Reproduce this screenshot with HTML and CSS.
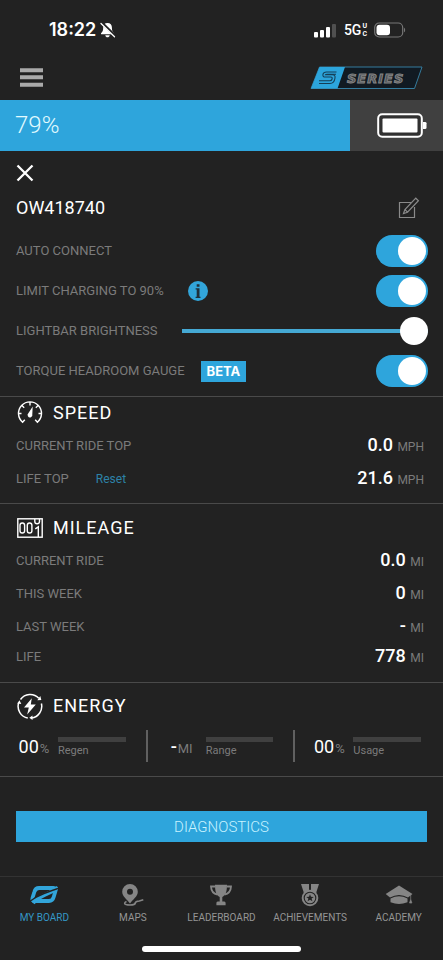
FILE: index.html
```html
<!DOCTYPE html>
<html lang="en">
<head>
<meta charset="utf-8">
<meta name="viewport" content="width=device-width, initial-scale=1">
<title>My Board</title>
<link rel="stylesheet" href="styles.css">
</head>
<body>
<div class="status">
  <div class="status-side">
    <span class="clock">18:22</span>
    <svg width="16" height="17" viewBox="0 0 16 17" aria-hidden="true">
      <path d="M7.500 1c-2.900 0-4.300 2-4.300 4.400 0 3.200-.6 4-2 5.500-.5.600-.2 1.300.5 1.300h11.700c.7 0 1-.7.500-1.300-1.400-1.500-2-2.300-2-5.500C11.900 3 10.400 1 7.500 1zM5.300 13.200h4.400c-.2 1.300-1.100 2.100-2.200 2.100s-2-.8-2.200-2.100z" fill="#fff"/>
      <path d="M2 1l13.500 13.200" stroke="#222" stroke-width="2.600"/>
      <path d="M1 1.500l13.500 13.200" stroke="#fff" stroke-width="1.300" stroke-linecap="round"/>
    </svg>
  </div>
  <div class="status-side status-right">
    <svg width="23" height="15" viewBox="0 0 23 15" aria-hidden="true">
      <rect x="0" y="9" width="4" height="5.500" rx="1" fill="#fff"/>
      <rect x="6" y="7" width="4" height="7.500" rx="1" fill="#fff"/>
      <rect x="12" y="4" width="4" height="10.500" rx="1" fill="#fff"/>
      <rect x="18" y="1" width="4" height="13.500" rx="1" fill="#505050"/>
    </svg>
    <span class="network">5G<span class="carrier"><span>U</span><span>C</span></span></span>
    <svg width="32" height="16" viewBox="0 0 32 16" aria-hidden="true">
      <rect x=".7" y="1" width="28" height="14" rx="4.500" fill="none" stroke="#777" stroke-width="1.200"/>
      <rect x="2.500" y="2.700" width="13.500" height="10.600" rx="3" fill="#fff"/>
      <path d="M30 5.700c1.500.6 1.500 4 0 4.600z" fill="#777"/>
    </svg>
  </div>
</div>

<header class="topbar">
  <button class="icon-button" aria-label="Menu">
    <svg width="23" height="20" viewBox="0 0 23 20"><path d="M0 2.200h23M0 9.300h23M0 16.700h23" stroke="#aaa" stroke-width="4"/></svg>
  </button>
  <svg width="113" height="24" viewBox="0 0 113 24" role="img" aria-label="S Series">
    <path d="M9.500 1H112L104.500 22.500H1z" fill="#111a22" stroke="#347b9d"/>
    <path d="M9.500 1H35L27.500 22.500H1z" fill="#2ca5dc"/>
    <path d="M26.500 6H16.500q-3 0-3.500 2.200-.6 2.800 2.300 2.800h5.500q1.800 0 1.300 2-.5 1.800-2.400 1.800H9M26 8.300H17q-1.300 0-1.500.4h7q3 0 2.500 3.300-.8 5.500-5 5.500H9" fill="none" stroke="#153f56" stroke-width="1.100"/>
    <text x="37" y="16.500" class="logo-text">SERIES</text>
  </svg>
</header>

<section class="charge" aria-label="Battery">
  <div class="charge-fill" style="width:79%">79%</div>
  <svg class="charge-icon" width="50" height="25" viewBox="0 0 50 25" aria-hidden="true">
    <rect x="1.200" y="1.200" width="43.600" height="22.600" rx="4" fill="#303030" stroke="#fff" stroke-width="2"/>
    <rect x="5.500" y="5.500" width="35" height="14" rx="1" fill="#fff"/>
    <path d="M46 9h2q1.500 0 1.500 1.200v4.600Q49.500 16 48 16h-2z" fill="#fff"/>
  </svg>
</section>

<main>
  <section class="settings">
    <button class="icon-button close" aria-label="Close">
      <svg width="18" height="18" viewBox="0 0 18 18"><path d="M1.500 1.500l15 15M16.500 1.500l-15 15" stroke="#fff" stroke-width="2.300"/></svg>
    </button>
    <div class="board">
      <h1>OW418740</h1>
      <button class="icon-button" aria-label="Rename board">
        <svg width="22" height="22" viewBox="0 0 22 22" fill="none" stroke="#8a8a8a" stroke-width="1.200"><path d="M13 5.500H1.500V20.500H16.500V10"/><path d="M5.500 16.500l1.400-4L17.800 1.200l2.600 2.500L9.500 15.200zM6.900 12.500l2.600 2.700"/></svg>
      </button>
    </div>
    <div class="setting">
      <label for="auto">AUTO CONNECT</label>
      <input class="toggle" id="auto" type="checkbox" role="switch" checked>
    </div>
    <div class="setting">
      <label for="limit">LIMIT CHARGING TO 90%</label>
      <button class="icon-button info" aria-label="About charge limit">
        <svg width="20" height="20" viewBox="0 0 20 20"><circle cx="10" cy="10" r="10" fill="#32a5da"/><path d="M8.700 3.200h2.800v2.500H8.700zM7.600 7.200h3.900v8.600h1v1.200H7.600v-1.200h1.100V8.400H7.600z" fill="#1f2f3a"/></svg>
      </button>
      <input class="toggle" id="limit" type="checkbox" role="switch" checked>
    </div>
    <div class="setting">
      <label for="brightness">LIGHTBAR BRIGHTNESS</label>
      <input class="slider" id="brightness" type="range" min="0" max="100" value="100">
    </div>
    <div class="setting">
      <label for="torque">TORQUE HEADROOM GAUGE</label>
      <span class="beta">BETA</span>
      <input class="toggle" id="torque" type="checkbox" role="switch" checked>
    </div>
  </section>

  <section class="panel speed">
    <h2>
      <svg width="26" height="24" viewBox="0 0 26 24" fill="none" stroke="#fff" stroke-width="1.400" aria-hidden="true">
        <path d="M5.700 21.300A11.500 11.500 0 1 1 20.300 21.300M7.800 18.700l-2.700 3.100M18.200 18.700l2.700 3.100M1.500 12.500h3M21.500 12.500h3M13 1v3.500M4.900 4.600l2.300 2.200M21.100 4.600l-2.300 2.200"/>
        <path d="M15.700 5.500l-.4 7.800a2.400 2.400 0 1 1-3.800-1.200z" fill="#fff" stroke="none"/>
      </svg>SPEED
    </h2>
    <dl>
      <div class="reading"><dt>CURRENT RIDE TOP</dt><dd>0.0 <small>MPH</small></dd></div>
      <div class="reading"><dt>LIFE TOP <button class="reset">Reset</button></dt><dd>21.6 <small>MPH</small></dd></div>
    </dl>
  </section>

  <section class="panel mileage">
    <h2>
      <svg width="26" height="20" viewBox="0 0 26 20" fill="none" stroke="#fff" stroke-width="1.400" aria-hidden="true">
        <rect x=".8" y=".8" width="24.400" height="18.400"/>
        <rect x="3" y="5" width="4.600" height="10" rx="2.200"/><rect x="10.300" y="5" width="4.600" height="10" rx="2.200"/>
        <path d="M17.800 1v2.500q0 2.200 2.300 2.200T22.500 3.500V1M18.300 10.800l3-2V19"/>
      </svg>MILEAGE
    </h2>
    <dl>
      <div class="reading"><dt>CURRENT RIDE</dt><dd>0.0 <small>MI</small></dd></div>
      <div class="reading"><dt>THIS WEEK</dt><dd>0 <small>MI</small></dd></div>
      <div class="reading"><dt>LAST WEEK</dt><dd>- <small>MI</small></dd></div>
      <div class="reading"><dt>LIFE</dt><dd>778 <small>MI</small></dd></div>
    </dl>
  </section>

  <section class="panel energy">
    <h2>
      <svg width="26" height="27" viewBox="0 0 26 27" fill="none" stroke="#fff" stroke-width="1.500" aria-hidden="true">
        <path d="M3.500 6.500A11.800 11.800 0 0 1 21.800 5.200M24.400 10.500A11.800 11.800 0 0 1 14.500 25M10.800 25A11.800 11.800 0 0 1 1.600 10"/>
        <path d="M20.300 7.300l4-.3-1-4zM15.500 22.500l-3.200 2.300 3.200 2.200zM.2 10.500l2.300-3.200 1.800 3.600zM14.800 5.200L7 14.500h4.800L10.200 21.500 18.800 11.600h-5z" fill="#fff" stroke="none"/>
      </svg>ENERGY
    </h2>
    <div class="stats">
      <div class="stat"><span class="amount">00<small>%</small></span><div class="meter"><i></i>Regen</div></div>
      <div class="stat"><span class="amount"><b>-</b><small>MI</small></span><div class="meter"><i></i>Range</div></div>
      <div class="stat"><span class="amount">00<small>%</small></span><div class="meter"><i></i>Usage</div></div>
    </div>
  </section>

  <div class="actions"><button class="diagnostics">DIAGNOSTICS</button></div>
</main>

<nav class="tabs">
  <a href="#board" class="active" aria-current="page">
    <svg width="28" height="24" viewBox="0 0 28 24" fill="none" aria-hidden="true">
      <path d="M9 5H23.500Q26.300 5 25.500 8L23.700 14Q22.600 18 19 18H4.500Q1.700 18 2.500 15L4.300 9Q5.400 5 9 5z" stroke="#32a5da" stroke-width="3.800"/>
      <path d="M3 20Q8 14.500 15.500 11.500T28 4.500" stroke="#32a5da" stroke-width="4"/>
      <path d="M0 18.300Q6 13.500 14 10.500T28 5.500" stroke="#222" stroke-width="1.400"/>
    </svg>
    MY BOARD
  </a>
  <a href="#maps">
    <svg width="24" height="24" viewBox="0 0 24 24" aria-hidden="true"><path d="M9 1a7.800 7.800 0 0 0-7.800 7.800C1.200 13.500 6 16.500 9 20.500c3-4 7.800-7 7.800-11.700A7.800 7.800 0 0 0 9 1zm0 4.800a3 3 0 1 1 0 6 3 3 0 0 1 0-6z" fill="#858585" fill-rule="evenodd"/><path d="M5.500 18.500q-2 .8-1.800 2 .5 1.500 5.300 1.500 5-.1 5.300-2 .2-1.800 4-2l4-1.200" fill="none" stroke="#858585" stroke-width="1.700"/></svg>
    MAPS
  </a>
  <a href="#leaderboard">
    <svg width="24" height="24" viewBox="0 0 24 24" aria-hidden="true"><path d="M6 1.800h12c0 7-1.300 10.500-4.700 12.200v4.500h2q1.300 0 1.300 1.500v2.200H7.400V20q0-1.500 1.300-1.500h2V14C7.300 12.300 6 8.800 6 1.800z" fill="#858585"/><path d="M6 3.500H2q.3 7 6.500 8M18 3.500h4q-.3 7-6.500 8" fill="none" stroke="#858585" stroke-width="1.800"/></svg>
    LEADERBOARD
  </a>
  <a href="#achievements">
    <svg width="24" height="24" viewBox="0 0 24 24" aria-hidden="true"><path d="M3 1h8v6.800l-5 2.400zM13 1h8l-3 9.200-5-2.400z" fill="#858585"/><circle cx="12" cy="15" r="8.300" fill="#858585"/><circle cx="12" cy="15" r="5.800" fill="none" stroke="#222" stroke-width="1.100"/><path d="M12 11.200l1 2.600 2.800.1-2.200 1.700.8 2.700-2.400-1.500-2.400 1.500.8-2.700-2.200-1.700 2.800-.1z" fill="#222"/></svg>
    ACHIEVEMENTS
  </a>
  <a href="#academy">
    <svg width="28" height="24" viewBox="0 0 28 24" aria-hidden="true"><path d="M14 2.500L27.500 11 23 14.500q-9-5-18 0L.7 11z" fill="#858585"/><path d="M5.500 15.500q8.500-4.500 17 0v3.700Q18 21 14 21t-8.500-1.800z" fill="#858585"/><path d="M25.700 11.500v5l1.200 3.500h-2.400l1.200-3.500" fill="#858585" stroke="#858585" stroke-width=".7"/></svg>
    ACADEMY
  </a>
</nav>
<div class="home-bar"></div>
</body>
</html>
```
FILE: styles.css
```css
:root {
  --blue: #2ea5dc;
  --bg: #222;
  --muted: #7b7b7b;
  --line: #4a4a4a;
}

* { box-sizing: border-box; }

body {
  margin: 0;
  min-height: 100vh;
  display: flex;
  flex-direction: column;
  background: var(--bg);
  color: #fff;
  font: 13px/16px Roboto, "Liberation Sans", sans-serif;
}

svg { display: block; flex: none; }
button { font: inherit; border: 0; cursor: pointer; }
h1, h2, dl, dd { margin: 0; font-weight: 400; }

.icon-button { padding: 0; background: none; }

/* Device status */
.status {
  display: flex;
  justify-content: space-between;
  align-items: center;
  height: 60px;
  padding: 0 37px 0 49px;
}
.status-side { display: flex; align-items: center; gap: 4px; }
.status-right { gap: 7px; }
.clock { font: 600 18px/20px Inter, sans-serif; }
.network { display: flex; align-items: center; gap: 1px; font-size: 14px; font-weight: 500; }
.carrier { display: flex; flex-direction: column; font-size: 7px; line-height: 8px; font-weight: 700; }

.topbar {
  display: flex;
  justify-content: space-between;
  align-items: center;
  height: 40px;
  padding: 0 20px 4px;
}
.logo-text {
  font: italic 700 13px "DejaVu Sans", sans-serif;
  letter-spacing: 1px;
  fill: #4b5055;
  stroke: #858585;
  stroke-width: 1px;
}

/* Charge level */
.charge {
  display: flex;
  align-items: center;
  justify-content: space-between;
  height: 51px;
  background: #404040;
}
.charge-fill {
  flex: none;
  height: 100%;
  padding-left: 15px;
  background: var(--blue);
  color: #e2fbff;
  font-size: 24px;
  font-weight: 300;
  line-height: 51px;
}
.charge-icon { margin-right: 16px; }

/* Board settings */
.settings { padding: 13px 15px 5px 16px; }
.close { display: block; }
.board {
  display: flex;
  justify-content: space-between;
  align-items: center;
  height: 49px;
  padding: 2px 8px 0 0;
}
.board h1 { font-size: 18px; line-height: 20px; }
.setting {
  display: flex;
  align-items: center;
  gap: 16px;
  height: 40px;
  color: var(--muted);
}
.info, .slider { margin: 0 0 0 8px; }
.toggle {
  appearance: none;
  flex: none;
  width: 52px;
  height: 32px;
  margin: 0 0 0 auto;
  padding: 2px;
  border-radius: 16px;
  background: #555;
}
.toggle::before {
  content: "";
  display: block;
  width: 28px;
  height: 28px;
  border-radius: 50%;
  background: #fff;
}
.toggle:checked { background: var(--blue); }
.toggle:checked::before { margin-left: auto; }

.slider {
  appearance: none;
  flex: 1;
  min-width: 0;
  height: 28px;
  background: linear-gradient(#45a9d4, #45a9d4) center / 100% 4px no-repeat;
}
.slider::-webkit-slider-thumb {
  appearance: none;
  width: 28px;
  height: 28px;
  border-radius: 50%;
  background: #fff;
}
.beta {
  padding: 2px 6px;
  background: var(--blue);
  color: #fff;
  font: 700 13px/17px Inter, sans-serif;
}

/* Readings */
.panel { border-top: 1px solid var(--line); }
.panel h2 {
  display: flex;
  align-items: center;
  gap: 10px;
  height: 32px;
  padding-left: 17px;
  font-size: 18px;
  letter-spacing: 1px;
}
.speed { padding-bottom: 8px; }
.mileage { padding: 8px 0 11px; }
.energy { padding: 7px 0 6px; border-bottom: 1px solid var(--line); }

.reading {
  display: flex;
  justify-content: space-between;
  align-items: center;
  height: 33px;
  padding: 0 19px 0 16px;
}
.mileage .reading:last-child { height: 28px; }
.reading dt { display: flex; align-items: center; gap: 27px; color: var(--muted); }
.reading dd { font-size: 18px; line-height: 24px; font-weight: 500; }
.reading small { color: var(--muted); font-size: 12px; font-weight: 400; }
.reset { padding: 0; background: none; color: #2d82a8; font-size: 12px; }

/* Energy */
.stats { display: grid; grid-template-columns: repeat(3, 1fr); padding: 8px 0; }
.stat {
  display: flex;
  align-items: center;
  height: 32px;
  padding: 4px 20px 0 12px;
  border-right: 2px solid #606060;
}
.stat:last-child { border-right-color: transparent; }
.amount { flex: none; width: 46px; padding-right: 2px; text-align: center; font-size: 18px; line-height: 24px; }
.amount b { font-weight: 500; }
.amount small { margin-left: 1px; color: var(--muted); font-size: 13px; }
.meter { flex: 1; color: var(--muted); font-size: 11px; line-height: 16px; }
.meter i { display: block; height: 5px; margin-bottom: 1px; background: #404040; }

.actions { padding: 34px 16px 32px; }
.diagnostics {
  display: block;
  width: 100%;
  height: 31px;
  padding: 0;
  background: var(--blue);
  color: #c8f3ff;
  font-size: 15px;
  font-weight: 300;
}

/* Navigation */
.tabs {
  display: grid;
  grid-template-columns: repeat(5, 1fr);
  margin-top: auto;
  padding: 6px 0 20px;
  border-top: 1px solid #333;
}
.tabs a {
  display: flex;
  flex-direction: column;
  align-items: center;
  gap: 3px;
  color: #959595;
  font-size: 10px;
  text-decoration: none;
}
.tabs .active { color: #3497c5; }
.home-bar {
  width: 36%;
  height: 6px;
  margin: 0 auto 8px;
  border-radius: 3px;
  background: #fff;
}
```
